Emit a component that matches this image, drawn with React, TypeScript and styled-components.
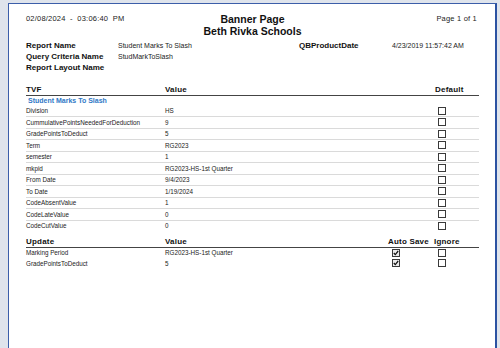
import styled, { createGlobalStyle } from 'styled-components';

const GlobalStyle = createGlobalStyle`
  html, body {
    margin: 0;
    background: #dfe4ec;
    overflow: hidden;
  }
  body {
    font-family: "Liberation Sans", Arial, sans-serif;
    color: #222;
  }
`;

const Viewer = styled.div`
  padding: 3px 3px 0 8px;
  height: 345px;
`;

const Sheet = styled.section`
  background: #fff;
  border-left: 1px solid #3b5ea9;
  border-top: 1px solid #3b5ea9;
  border-right: 2px solid #2b52a2;
  height: 100%;
  padding: 9px 16px 0 17px;
`;

const TopBar = styled.header`
  display: grid;
  grid-template-columns: 1fr auto 1fr;
  align-items: start;
`;

const Stamp = styled.div`
  font-size: 7.5px;
  line-height: 12px;
  white-space: pre;
  letter-spacing: 0.2px;
`;

const Titles = styled.div`
  display: flex;
  flex-direction: column;
  align-items: center;
`;

const Title = styled.div`
  font-size: 10.5px;
  font-weight: 700;
  line-height: 12px;
  color: #111;
`;

const PageNo = styled.div`
  justify-self: end;
  font-size: 7.5px;
  line-height: 12px;
  letter-spacing: 0.2px;
  padding-right: 2px;
`;

const Meta = styled.div`
  display: grid;
  grid-template-columns: 92px 181px 93px 1fr;
  grid-auto-rows: 11px;
  align-items: center;
  margin-top: 2.5px;
`;

const MetaLabel = styled.div`
  font-size: 8px;
  font-weight: 700;
  color: #111;
`;

const MetaValue = styled.div`
  font-size: 7px;
`;

const Table = styled.div<{ $cols: string }>`
  display: grid;
  grid-template-columns: ${(p) => p.$cols};
`;

const HeadCell = styled.div<{ $top: number }>`
  font-size: 8px;
  font-weight: 700;
  line-height: 11px;
  color: #111;
  margin-top: ${(p) => p.$top}px;
  border-bottom: 1px solid #444;
  letter-spacing: 0.2px;
  white-space: nowrap;
`;

const Section = styled.div`
  grid-column: 1 / -1;
  font-size: 7px;
  font-weight: 700;
  line-height: 10px;
  color: #2f78c6;
  padding-left: 2px;
`;

const Cell = styled.div<{ $lined?: boolean }>`
  height: 10.5px;
  display: flex;
  align-items: center;
  font-size: 6.3px;
  color: #222;
  border-bottom: ${(p) => (p.$lined ? '1px solid #dadada' : '0')};
`;

const BoxCell = styled(Cell)<{ $indent: number }>`
  padding-left: ${(p) => p.$indent}px;
`;

const Box = styled.span<{ $checked?: boolean }>`
  display: inline-flex;
  width: 8px;
  height: 8px;
  box-sizing: border-box;
  border: 1px solid #3a3a3a;
  background: ${(p) => (p.$checked ? '#ececec' : '#fff')};
  align-items: center;
  justify-content: center;
`;

const Tick = () => (
  <svg width="6" height="6" viewBox="0 0 6 6">
    <path d="M0.8 3 L2.3 4.6 L5.2 1" fill="none" stroke="#111" strokeWidth="1.2" />
  </svg>
);

const Check = ({ checked }: { checked?: boolean }) => (
  <Box $checked={checked}>{checked && <Tick />}</Box>
);

const tvfRows: [string, string][] = [
  ['Division', 'HS'],
  ['CummulativePointsNeededForDeduction', '9'],
  ['GradePointsToDeduct', '5'],
  ['Term', 'RG2023'],
  ['semester', '1'],
  ['mkpid', 'RG2023-HS-1st Quarter'],
  ['From Date', '9/4/2023'],
  ['To Date', '1/19/2024'],
  ['CodeAbsentValue', '1'],
  ['CodeLateValue', '0'],
  ['CodeCutValue', '0'],
];

const updateRows: [string, string][] = [
  ['Marking Period', 'RG2023-HS-1st Quarter'],
  ['GradePointsToDeduct', '5'],
];

function App() {
  return (
    <>
      <GlobalStyle />
      <Viewer>
        <Sheet>
          <TopBar>
            <Stamp>02/08/2024  -  03:06:40  PM</Stamp>
            <Titles>
              <Title>Banner Page</Title>
              <Title>Beth Rivka Schools</Title>
            </Titles>
            <PageNo>Page 1 of 1</PageNo>
          </TopBar>

          <Meta>
            <MetaLabel>Report Name</MetaLabel>
            <MetaValue>Student Marks To Slash</MetaValue>
            <MetaLabel>QBProductDate</MetaLabel>
            <MetaValue>4/23/2019 11:57:42 AM</MetaValue>
            <MetaLabel>Query Criteria Name</MetaLabel>
            <MetaValue>StudMarkToSlash</MetaValue>
            <span />
            <span />
            <MetaLabel>Report Layout Name</MetaLabel>
          </Meta>

          <Table $cols="139px 1fr 44px">
            <HeadCell $top={11}>TVF</HeadCell>
            <HeadCell $top={11}>Value</HeadCell>
            <HeadCell $top={11}>Default</HeadCell>
            <Section>Student Marks To Slash</Section>
            {tvfRows.map(([name, value], i) => {
              const lined = i < tvfRows.length - 1;
              return [
                <Cell key={name + 'n'} $lined={lined}>{name}</Cell>,
                <Cell key={name + 'v'} $lined={lined}>{value}</Cell>,
                <BoxCell key={name + 'd'} $lined={lined} $indent={3}>
                  <Check />
                </BoxCell>,
              ];
            })}
          </Table>

          <Table $cols="139px 1fr 46px 45px">
            <HeadCell $top={4.5}>Update</HeadCell>
            <HeadCell $top={4.5}>Value</HeadCell>
            <HeadCell $top={4.5}>Auto Save</HeadCell>
            <HeadCell $top={4.5}>Ignore</HeadCell>
            {updateRows.map(([name, value]) => [
              <Cell key={name + 'n'}>{name}</Cell>,
              <Cell key={name + 'v'}>{value}</Cell>,
              <BoxCell key={name + 'a'} $indent={4}>
                <Check checked />
              </BoxCell>,
              <BoxCell key={name + 'i'} $indent={4}>
                <Check />
              </BoxCell>,
            ])}
          </Table>
        </Sheet>
      </Viewer>
    </>
  );
}

export default App;
